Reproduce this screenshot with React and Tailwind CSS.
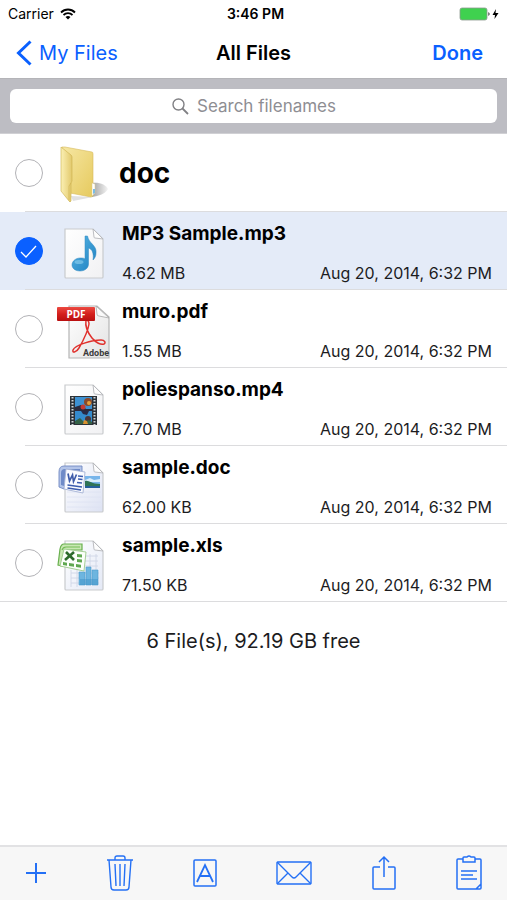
import { useState } from "react";

const FolderIcon = () => (
    <svg viewBox="0 0 56 65" className="w-14 h-[65px]" aria-hidden="true">
        <defs>
            <linearGradient id="folderBack" x1="0" y1="0" x2="1" y2="1">
                <stop offset="0" stopColor="#f6e7a4" />
                <stop offset="1" stopColor="#e6ca5e" />
            </linearGradient>
            <linearGradient id="folderFlap" x1="0" y1="0" x2="1" y2="0">
                <stop offset="0" stopColor="#fbf0b4" />
                <stop offset="1" stopColor="#e2c96c" />
            </linearGradient>
            <linearGradient id="folderShade" x1="0" y1="0" x2="1" y2="0">
                <stop offset="0" stopColor="#a3a3a3" />
                <stop offset="1" stopColor="#f4f4f4" />
            </linearGradient>
        </defs>
        <path d="M37 43C45 42 51 45 53 49C50 54 44 56 37 57Z" fill="url(#folderShade)" />
        <path d="M16 56L38 57L18 61Z" fill="#c4c4c4" opacity="0.5" />
        <path d="M7 7L10 7L37 12Q38 12 38 14V56L36 57L15 53Z" fill="url(#folderBack)" stroke="#d6bb5c" strokeWidth="0.6" />
        <path d="M37 43l3 1v9l-3 3z" fill="#fff" stroke="#d8c98a" strokeWidth="0.5" />
        <path d="M38 49h2v4l-2 1z" fill="#7bbde6" />
        <path d="M6 7L16 15Q17 16 17 17V41L16 43L16 61Q15 63 14 61L6 51Z" fill="url(#folderFlap)" stroke="#cbae4c" strokeWidth="0.6" />
        <path d="M16 43L14 46V60" fill="none" stroke="#cbae4c" strokeWidth="0.6" />
    </svg>
);

const Page = ({ id, tint = "#f1f1f3" }) => (
    <>
        <defs>
            <linearGradient id={id} x1="0" y1="0" x2="1" y2="1">
                <stop offset="0" stopColor="#fff" />
                <stop offset="1" stopColor={tint} />
            </linearGradient>
        </defs>
        <path d="M10 11H38L48 21V59Q48 60 47 60H11Q10 60 10 59Z" fill={`url(#${id})`} stroke="#c9cbce" strokeWidth="1.2" />
        <path d="M38 11L39 19Q39 20 40 20L48 21Z" fill="#fdfdfd" stroke="#b4b6ba" strokeWidth="0.9" />
    </>
);

const AudioIcon = () => (
    <svg viewBox="0 0 56 65" className="w-14 h-[65px]" aria-hidden="true">
        <Page id="audioPage" />
        <defs>
            <linearGradient id="note" x1="0" y1="0" x2="1" y2="1">
                <stop offset="0" stopColor="#5bb8e6" />
                <stop offset="1" stopColor="#1c7fc0" />
            </linearGradient>
        </defs>
        <path
            d="M30 18H32.500C34 26 42 27 41 35C41 38 40 40 38 42C39 35 37 31 33.500 30V46C33.500 50 30 53 25 53C20 53 17 50 17 47C17 43 21 40 25 40C28 40 29 40 30 41Z"
            fill="url(#note)"
            stroke="#3189c0"
            strokeWidth="0.5"
        />
        <ellipse cx="24" cy="44" rx="4.500" ry="2" fill="#8fd0ee" opacity="0.6" />
    </svg>
);

const PdfIcon = () => (
    <svg viewBox="0 0 56 65" className="w-14 h-[65px]" aria-hidden="true">
        <defs>
            <linearGradient id="pdfPage" x1="0" y1="0" x2="1" y2="1">
                <stop offset="0" stopColor="#fff" />
                <stop offset="1" stopColor="#e3e3e3" />
            </linearGradient>
            <linearGradient id="pdfBand" x1="0" y1="0" x2="0" y2="1">
                <stop offset="0" stopColor="#ec4a42" />
                <stop offset="0.5" stopColor="#d41f1c" />
                <stop offset="1" stopColor="#b90f10" />
            </linearGradient>
        </defs>
        <path d="M14 10H42L54 21V62H14Z" fill="url(#pdfPage)" stroke="#b5b5b5" strokeWidth="1.200" />
        <path d="M41 10L42 18Q42 20 44 20L54 22Z" fill="#fafafa" stroke="#a9a9a9" strokeWidth="0.8" />
        <path
            d="M31 24C30 30 33 37 37 42C41 47 46 49 49 48C51 47 50 44 46 44C37 44 20 49 18 54C17 57 21 57 24 52C28 45 33 35 34 28C34 25 33 24 31 24Z"
            fill="none"
            stroke="#e0302c"
            strokeWidth="1.500"
        />
        <rect x="2" y="11" width="38" height="14" rx="1" fill="url(#pdfBand)" />
        <text x="21" y="22" textAnchor="middle" fontFamily="Open Sans, sans-serif" fontWeight="700" fontSize="10" fill="#fff">
            PDF
        </text>
        <text x="41" y="60" textAnchor="middle" fontFamily="Roboto, sans-serif" fontWeight="700" fontSize="9" fill="#3c3c3c">
            Adobe
        </text>
    </svg>
);

const VideoIcon = () => (
    <svg viewBox="0 0 56 65" className="w-14 h-[65px]" aria-hidden="true">
        <Page id="videoPage" />
        <rect x="15" y="22" width="27" height="29" fill="#2c3238" />
        <path d="M17.500 23V51M39.500 23V51" stroke="#cfd5d8" strokeWidth="2" strokeDasharray="1.5 1.5" />
        <rect x="20" y="23" width="17" height="13" fill="#3d91d2" />
        <rect x="20" y="37" width="17" height="13" fill="#348bcc" />
        <path d="M20 33L26 31L31 35H37V37H20Z" fill="#2b2a3c" />
        <circle cx="33" cy="28" r="4" fill="#8b4a2a" />
        <circle cx="34" cy="29" r="2" fill="#e5a23c" />
        <circle cx="28" cy="33" r="2.500" fill="#c43b34" />
        <path d="M26 37H34L32 41L28 40Z" fill="#292a45" />
        <circle cx="33" cy="45" r="3" fill="#4b3537" />
        <path d="M20 47L25 44L29 48L34 46L37 48V50H20Z" fill="#356247" />
        <path d="M29 46l3 1 1 3h-5z" fill="#d9912e" />
    </svg>
);

const WordIcon = () => (
    <svg viewBox="0 0 56 65" className="w-14 h-[65px]" aria-hidden="true">
        <Page id="wordPage" tint="#dde2f3" />
        <path d="M12 40H46M12 45H46M12 50H46M12 55H46" stroke="#dde2f2" strokeWidth="0.8" />
        <rect x="30" y="24" width="15" height="12" fill="#78b5ea" />
        <path d="M30 28l5-2 4 2 6-1v3H30z" fill="#d9edfa" />
        <path d="M30 29C34 28 36 32 45 32V36H30Z" fill="#2f7355" />
        <path d="M30 34H45V36H30Z" fill="#255f9b" />
        <path d="M9 14H27V22H12L9 37L4 35V20Q4 14 9 14Z" fill="#b4c5e9" stroke="#7189c2" strokeWidth="0.9" />
        <path d="M6 21Q6 17 10 17H25V20H12L9 34L6 33Z" fill="#6f8bc8" />
        <path d="M11 17L30 20L28 41L9 37Z" fill="#fafbff" stroke="#a5b2d5" strokeWidth="0.9" />
        <path d="M13 21.500L14.500 29L17.500 23L18.500 29.500L21.500 22.500" fill="none" stroke="#3f5caa" strokeWidth="1.700" />
        <path d="M23 24L28 24.500M23 27L27.500 27.500M22 30.500L27 31M12.500 33L27 35M12.500 36L26 38" stroke="#3c5cae" strokeWidth="1.600" />
    </svg>
);

const ExcelIcon = () => (
    <svg viewBox="0 0 56 65" className="w-14 h-[65px]" aria-hidden="true">
        <Page id="excelPage" tint="#e4e9f6" />
        <path d="M16 43H44M16 48H44M16 53H44M30 26H43M30 31H43M30 36H43M16 40V57M22 40V57M35 24V40M41 24V40" stroke="#cfd6e6" strokeWidth="0.9" />
        <path d="M24 42H30V55H24ZM31 37H36V55H31ZM37 40H43V55H37Z" fill="#6db5df" stroke="#4c9bcc" strokeWidth="0.6" />
        <path d="M25 49H43V55H25Z" fill="#3d91c8" opacity="0.5" />
        <path d="M9 14H27V20H13L7 36L3 35L5 19Q6 14 9 14Z" fill="#c9e8b3" stroke="#68b04e" strokeWidth="1.200" />
        <path d="M7 20Q8 17 11 17H25" fill="none" stroke="#74bb57" strokeWidth="1.200" />
        <path d="M9 19L31 22L29 41L5 36Z" fill="#fbfffa" stroke="#9cc98a" strokeWidth="0.9" />
        <path d="M11 22L19 30M19 22L10 30" stroke="#2c6a2b" strokeWidth="2.600" />
        <path d="M22 24l5 .6v3l-5-.5zM22 29l5 .6v3l-5-.5zM8 32l4 .7v3l-4-.7zM14 33l5 .7v3l-5-.7zM21 34l5 .7v3l-5-.7z" fill="#5fa850" />
    </svg>
);

const initialFiles = [
    { name: "doc", folder: true, Icon: FolderIcon },
    { name: "MP3 Sample.mp3", size: "4.62 MB", date: "Aug 20, 2014, 6:32 PM", Icon: AudioIcon },
    { name: "muro.pdf", size: "1.55 MB", date: "Aug 20, 2014, 6:32 PM", Icon: PdfIcon },
    { name: "poliespanso.mp4", size: "7.70 MB", date: "Aug 20, 2014, 6:32 PM", Icon: VideoIcon },
    { name: "sample.doc", size: "62.00 KB", date: "Aug 20, 2014, 6:32 PM", Icon: WordIcon },
    { name: "sample.xls", size: "71.50 KB", date: "Aug 20, 2014, 6:32 PM", Icon: ExcelIcon },
];

const FileRow = ({ file, checked, onToggle, last }) => {
    const { name, size, date, folder, Icon } = file;

    return (
        <li className={checked ? "bg-[#e4ebf8]" : "bg-white"}>
            <label className="flex items-center h-[77px] px-[15px]">
                <span className="relative flex shrink-0">
                    <input
                        type="checkbox"
                        checked={checked}
                        onChange={onToggle}
                        aria-label={name}
                        className="peer appearance-none size-7 rounded-full border border-[#b2b2b6] bg-white checked:bg-[#0a60ff] checked:border-[#0a60ff]"
                    />
                    <svg viewBox="0 0 28 28" className="absolute inset-0 size-7 hidden peer-checked:block pointer-events-none" aria-hidden="true">
                        <path d="M6 15L11 20L21 9" fill="none" stroke="#fff" strokeWidth="1.300" />
                    </svg>
                </span>
                <span className="ml-3 shrink-0">
                    <Icon />
                </span>
                {folder ? (
                    <span className="ml-2 text-[28px] leading-8 font-bold">{name}</span>
                ) : (
                    <span className="ml-[11px] pt-1 flex-1 min-w-0">
                        <span className="block text-[19px] leading-6 font-bold">{name}</span>
                        <span className="mt-[17px] flex justify-between text-base leading-5 text-[#1c1c1e]">
                            <span>{size}</span>
                            <span>{date}</span>
                        </span>
                    </span>
                )}
            </label>
            <div className={last ? "h-px bg-[#dcdcde]" : "h-px ml-[25px] bg-[#dcdcde]"}></div>
        </li>
    );
};

const App = () => {
    const [files] = useState(initialFiles);
    const [selected, setSelected] = useState(["MP3 Sample.mp3"]);
    const [query, setQuery] = useState("");

    const toggle = (name) => {
        setSelected(selected.includes(name) ? selected.filter((n) => n !== name) : [...selected, name]);
    };

    const shown = files.filter((f) => f.name.toLowerCase().includes(query.toLowerCase()));

    return (
        <div className="min-h-screen flex flex-col bg-white text-black font-['Inter',sans-serif]">
            <header className="border-b border-[#b4b4b8]">
                <div className="grid grid-cols-3 items-center h-[27px] px-2 text-sm leading-4">
                    <div className="flex items-center gap-[6px]">
                        <span>Carrier</span>
                        <svg viewBox="0 0 16 12" className="w-4 h-3" aria-hidden="true">
                            <path d="M1 4.500C5 .5 11 .5 15 4.500M3.500 7C6 4.600 10 4.600 12.500 7" fill="none" stroke="#000" strokeWidth="1.800" />
                            <path d="M5.500 9Q8 7 10.500 9L8 11.500Z" />
                        </svg>
                    </div>
                    <span className="text-center font-semibold pl-1">3:46 PM</span>
                    <div className="flex items-center justify-end">
                        <svg viewBox="0 0 42 14" className="w-[42px] h-[14px]" aria-hidden="true">
                            <rect x="3" y="1" width="27" height="12" rx="2" fill="#3fd14f" stroke="#8d9a8f" strokeWidth="0.8" />
                            <path d="M31.500 5Q33.500 7 31.500 9Z" />
                            <path d="M39 2L35.500 8H38L37.500 12L41.500 6H38.500Z" />
                        </svg>
                    </div>
                </div>
                <nav className="grid grid-cols-3 items-center h-[51px] pl-4 pr-6 text-xl leading-6">
                    <button type="button" className="flex items-center gap-[7px] text-[#0a60ff] whitespace-nowrap">
                        <svg viewBox="0 0 16 26" className="w-4 h-[26px]" aria-hidden="true">
                            <path d="M14.500 1.500L2.500 13L14.500 24.500" fill="none" stroke="#0a60ff" strokeWidth="3" />
                        </svg>
                        My Files
                    </button>
                    <h1 className="text-center font-semibold pl-2">All Files</h1>
                    <button type="button" className="justify-self-end font-semibold text-[#0a60ff]">
                        Done
                    </button>
                </nav>
            </header>

            <div className="bg-[#bdbdc3] px-[10px] py-[10px] border-b border-[#d0d0d4]">
                <label className="flex items-center justify-center gap-2 h-[34px] rounded-md bg-white">
                    <svg viewBox="0 0 18 18" className="size-[18px]" aria-hidden="true">
                        <circle cx="7.500" cy="7.500" r="5.500" fill="none" stroke="#808084" strokeWidth="1.400" />
                        <path d="M11.500 11.500L17 17" stroke="#808084" strokeWidth="1.800" />
                    </svg>
                    <input
                        type="text"
                        value={query}
                        onChange={(e) => setQuery(e.target.value)}
                        placeholder="Search filenames"
                        aria-label="Search filenames"
                        className="field-sizing-content text-[17px] leading-5 outline-none placeholder:text-[#8e8e93]"
                    />
                </label>
            </div>

            <main className="flex-1">
                <ul>
                    {shown.map((file, i) => (
                        <FileRow
                            key={file.name}
                            file={file}
                            checked={selected.includes(file.name)}
                            onToggle={() => toggle(file.name)}
                            last={i === shown.length - 1}
                        />
                    ))}
                </ul>
                <p className="mt-[27px] text-center text-xl leading-6 text-[#1c1c1e]">6 File(s), 92.19 GB free</p>
            </main>

            <footer className="flex items-center justify-between h-[55px] pb-[2px] px-[25px] border-t-2 border-[#e2e2e4] bg-[#f7f7f7] text-[#2470f5]">
                <button type="button" aria-label="Add">
                    <svg viewBox="0 0 22 36" className="w-[22px] h-9" fill="none" stroke="currentColor" strokeWidth="2">
                        <path d="M1 18H21M11 8V28" />
                    </svg>
                </button>
                <button type="button" aria-label="Delete">
                    <svg viewBox="0 0 26 36" className="w-[26px] h-9" fill="none" stroke="currentColor" strokeWidth="1.400">
                        <path d="M0 5H26M2 5L4 32Q4 35 7 35H19Q22 35 22 32L24 5M8 5V3Q8 1 10 1H16Q18 1 18 3V5M8 9L9 31M13 9V31M18 9L17 31" />
                    </svg>
                </button>
                <button type="button" aria-label="Rename">
                    <svg viewBox="0 0 24 36" className="w-6 h-9" fill="none" stroke="currentColor" strokeWidth="1.500">
                        <rect x="1" y="5" width="22" height="26" rx="1" />
                        <path d="M4 27L12 10L20 27M7 21H17" strokeWidth="1.800" />
                    </svg>
                </button>
                <button type="button" aria-label="Mail">
                    <svg viewBox="0 0 36 36" className="size-9" fill="none" stroke="currentColor" strokeWidth="1.400">
                        <rect x="1" y="7" width="34" height="22" rx="1" />
                        <path d="M1 7L16 22Q18 24 20 22L35 7M1 29L12 18M35 29L24 18" />
                    </svg>
                </button>
                <button type="button" aria-label="Share">
                    <svg viewBox="0 0 24 36" className="w-6 h-9" fill="none" stroke="currentColor" strokeWidth="1.500">
                        <path d="M8 12H2Q1 12 1 13V33Q1 34 2 34H22Q23 34 23 33V13Q23 12 22 12H16M12 22V2M7 7L12 2L17 7" />
                    </svg>
                </button>
                <button type="button" aria-label="Paste">
                    <svg viewBox="0 0 26 36" className="w-[26px] h-9" fill="none" stroke="currentColor" strokeWidth="1.500">
                        <path d="M7 4H2Q1 4 1 5V33Q1 34 2 34H24Q25 34 25 33V5Q25 4 24 4H19M20 34L25 29M5 16H21M5 20H17M5 24H21" />
                        <path d="M7 3Q7 2 8 2H11Q13 0 15 2H18Q19 2 19 3V7H7Z" />
                    </svg>
                </button>
            </footer>
        </div>
    );
};

export default App;
